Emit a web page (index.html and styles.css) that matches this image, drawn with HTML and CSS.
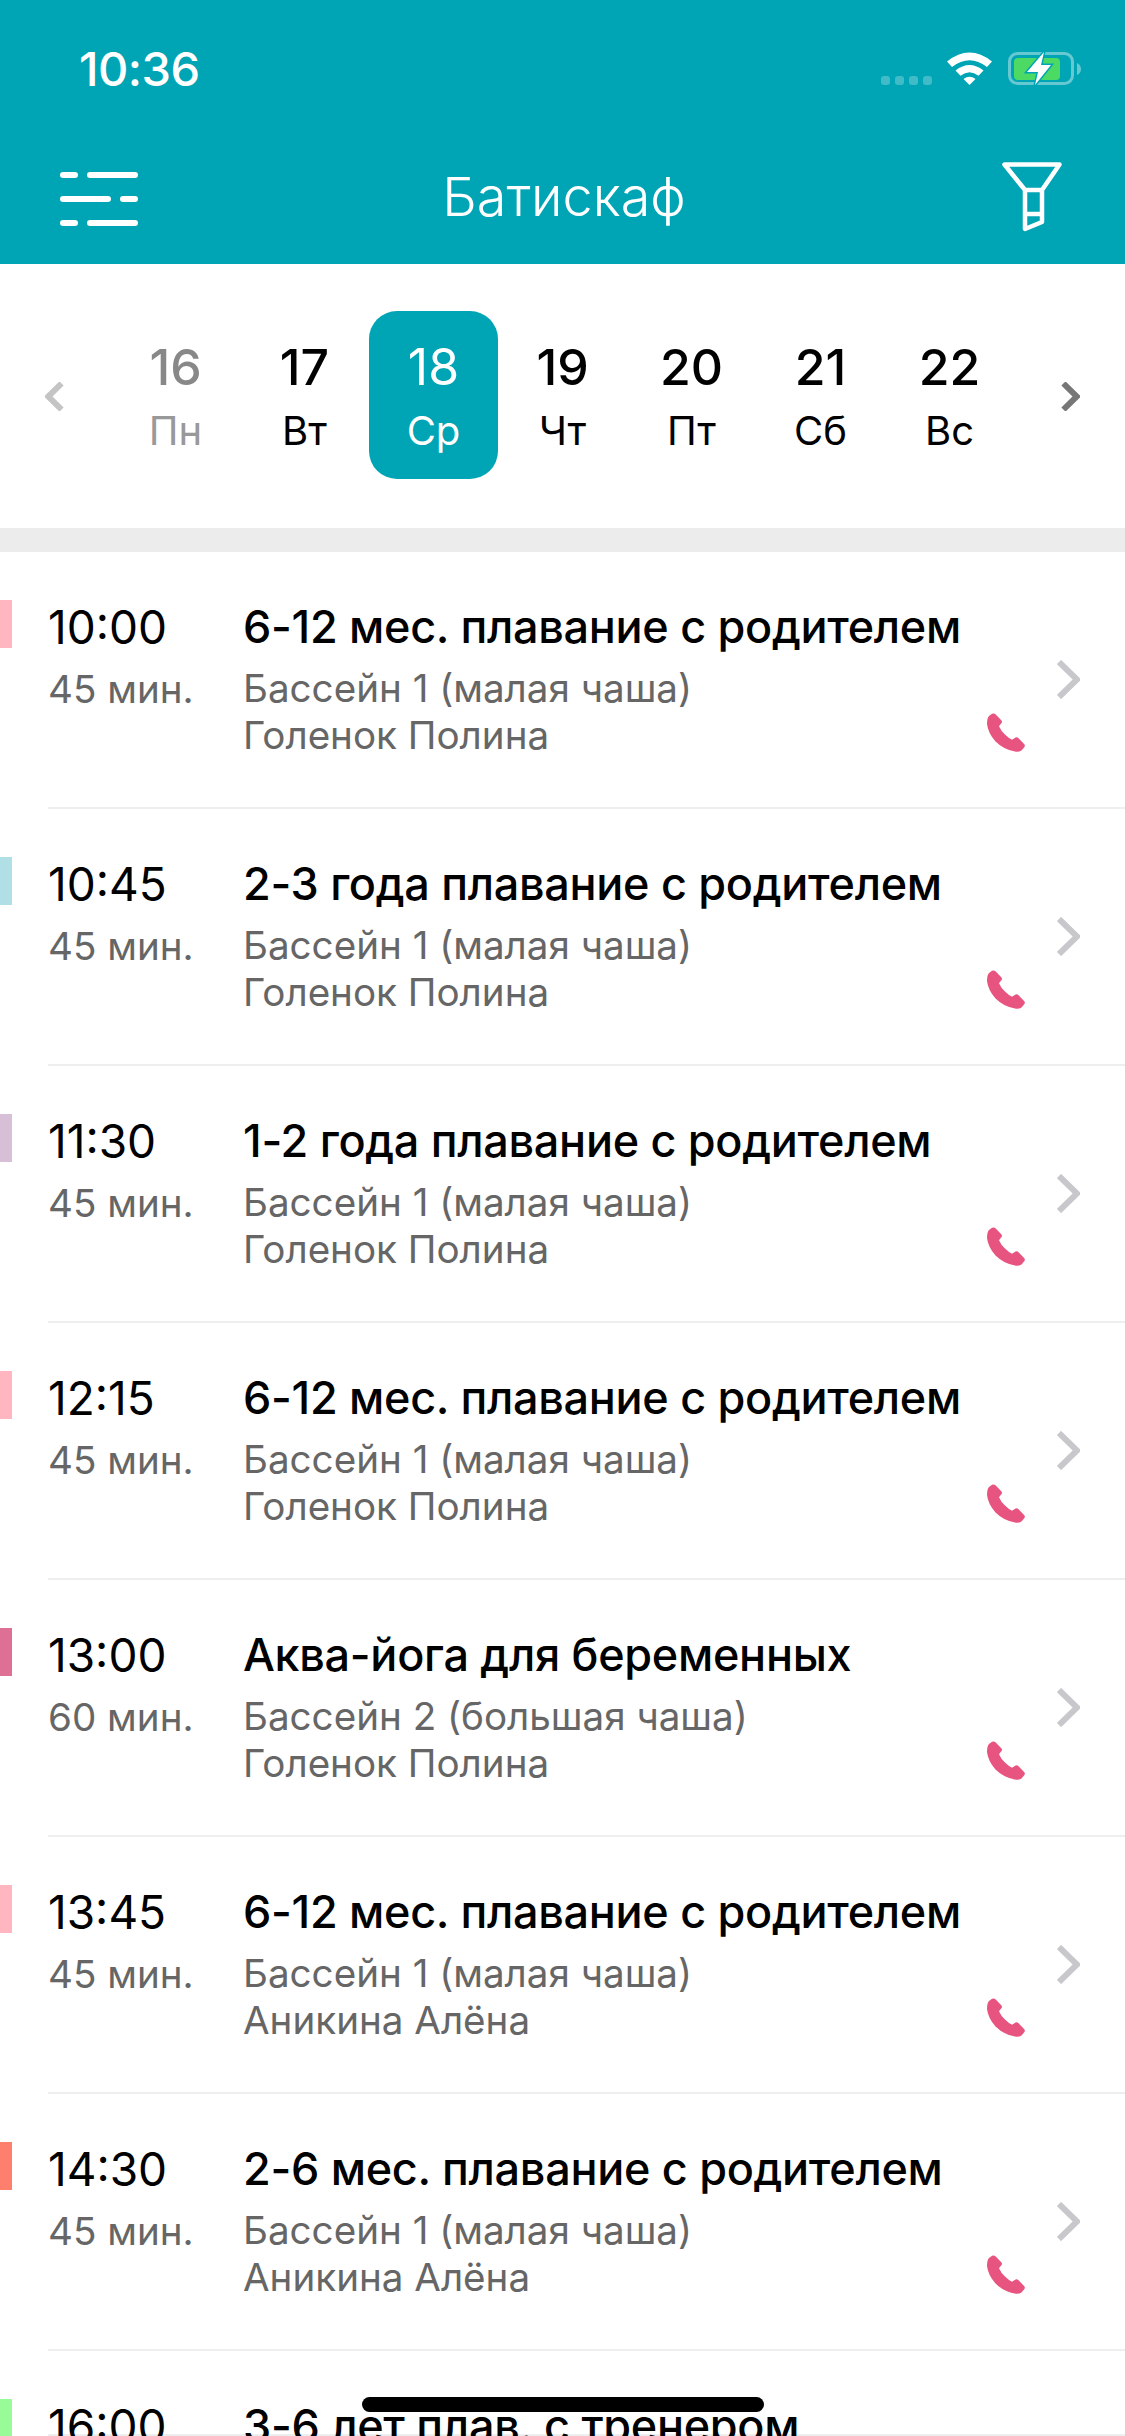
FILE: index.html
```html
<!DOCTYPE html>
<html lang="ru">
<head>
    <meta charset="UTF-8">
    <title>Батискаф</title>
    <link rel="stylesheet" href="styles.css">
</head>
<body>
    <svg class="sprite" width="0" height="0">
        <symbol id="phone" viewBox="0 0 38 39">
            <path d="M2 3 L5 .8 Q7 -.2 8.5 1.2 L14.5 7.5 Q15.5 9 14.5 10 L12 13.2 Q14 18 18 21.5 Q21.5 25 25 26.8 L28.5 24.5 Q30 23.7 31.3 25 L37.3 31.2 Q38.5 33 37 34.5 L34.5 37.5 Q32.5 39 29 38.8 Q17 37 8.5 28.5 Q1 20 0 11 Q0 5 2 3 Z"/>
        </symbol>
        <symbol id="chevron" viewBox="0 0 23 39">
            <path d="M2 2 L20 19.5 L2 37" fill="none" stroke="currentColor"/>
        </symbol>
    </svg>

    <header class="top">
        <div class="status">
            <span class="clock">10:36</span>
            <div class="status-icons">
                <div class="signal"><i></i><i></i><i></i><i></i></div>
                <svg class="wifi" width="45" height="33" viewBox="0 0 45 33">
                    <path d="M0 9.5 Q22.5 -8.5 45 9.5 L40 15 Q22.5 1.5 5 15 Z" fill="#fff"/>
                    <path d="M8.5 18.5 Q22.5 7.5 36.5 18.5 L31.5 23.8 Q22.5 16.5 13.5 23.8 Z" fill="#fff"/>
                    <path d="M16.5 27 Q22.5 22.5 28.5 27 L22.5 33 Z" fill="#fff"/>
                </svg>
                <svg class="battery" width="74" height="34" viewBox="0 0 74 34">
                    <rect x="1.5" y="1.5" width="63" height="30" rx="8" fill="none" stroke="#fff" stroke-opacity=".4" stroke-width="3"/>
                    <path d="M69 11 Q73 13 73 17 Q73 21 69 23 Z" fill="#fff" fill-opacity=".4"/>
                    <rect x="6" y="6" width="46" height="22" rx="4" fill="#4cd964"/>
                    <path d="M36 0 L19 20 L30 20 L27 33 L43 13 L33 13 Z" fill="#fff" stroke="#00a5b5" stroke-width="3" paint-order="stroke"/>
                </svg>
            </div>
        </div>
        <nav class="navbar">
            <svg class="menu-icon" width="78" height="54" viewBox="0 0 78 54">
                <g fill="#fff">
                    <rect x="0" y="0" width="18" height="6" rx="3"/>
                    <rect x="27" y="0" width="51" height="6" rx="3"/>
                    <rect x="0" y="24" width="51" height="6" rx="3"/>
                    <rect x="60" y="24" width="18" height="6" rx="3"/>
                    <rect x="0" y="48" width="18" height="6" rx="3"/>
                    <rect x="27" y="48" width="51" height="6" rx="3"/>
                </g>
            </svg>
            <h1 class="title">Батискаф</h1>
            <svg class="filter-icon" width="60" height="70" viewBox="0 0 60 70">
                <path d="M2.5 2.5 H57.5 L40 28 V60 L23 67 V28 Z M23 28 H40 M23 52 H40" fill="none" stroke="#fff" stroke-width="4.5" stroke-linejoin="round"/>
            </svg>
        </nav>
    </header>

    <section class="dates">
        <svg class="arrow arrow-prev"><use href="#chevron"/></svg>
        <div class="week">
            <div class="day day-past"><b>16</b><span>Пн</span></div>
            <div class="day"><b>17</b><span>Вт</span></div>
            <div class="day day-current"><b>18</b><span>Ср</span></div>
            <div class="day"><b>19</b><span>Чт</span></div>
            <div class="day"><b>20</b><span>Пт</span></div>
            <div class="day"><b>21</b><span>Сб</span></div>
            <div class="day"><b>22</b><span>Вс</span></div>
        </div>
        <svg class="arrow arrow-next"><use href="#chevron"/></svg>
    </section>

    <main class="lessons">
        <article class="lesson">
            <div class="mark mark-pink"></div>
            <div class="lesson-body">
                <div class="when"><div class="time">10:00</div><div class="length">45 мин.</div></div>
                <div class="info"><div class="name">6-12 мес. плавание с родителем</div><div class="place">Бассейн 1 (малая чаша)</div><div class="place">Голенок Полина</div></div>
                <div class="actions"><svg class="go"><use href="#chevron"/></svg><svg class="call"><use href="#phone"/></svg></div>
            </div>
        </article>
        <article class="lesson">
            <div class="mark mark-blue"></div>
            <div class="lesson-body">
                <div class="when"><div class="time">10:45</div><div class="length">45 мин.</div></div>
                <div class="info"><div class="name">2-3 года плавание с родителем</div><div class="place">Бассейн 1 (малая чаша)</div><div class="place">Голенок Полина</div></div>
                <div class="actions"><svg class="go"><use href="#chevron"/></svg><svg class="call"><use href="#phone"/></svg></div>
            </div>
        </article>
        <article class="lesson">
            <div class="mark mark-thistle"></div>
            <div class="lesson-body">
                <div class="when"><div class="time">11:30</div><div class="length">45 мин.</div></div>
                <div class="info"><div class="name">1-2 года плавание с родителем</div><div class="place">Бассейн 1 (малая чаша)</div><div class="place">Голенок Полина</div></div>
                <div class="actions"><svg class="go"><use href="#chevron"/></svg><svg class="call"><use href="#phone"/></svg></div>
            </div>
        </article>
        <article class="lesson">
            <div class="mark mark-pink"></div>
            <div class="lesson-body">
                <div class="when"><div class="time">12:15</div><div class="length">45 мин.</div></div>
                <div class="info"><div class="name">6-12 мес. плавание с родителем</div><div class="place">Бассейн 1 (малая чаша)</div><div class="place">Голенок Полина</div></div>
                <div class="actions"><svg class="go"><use href="#chevron"/></svg><svg class="call"><use href="#phone"/></svg></div>
            </div>
        </article>
        <article class="lesson">
            <div class="mark mark-violet"></div>
            <div class="lesson-body">
                <div class="when"><div class="time">13:00</div><div class="length">60 мин.</div></div>
                <div class="info"><div class="name">Аква-йога для беременных</div><div class="place">Бассейн 2 (большая чаша)</div><div class="place">Голенок Полина</div></div>
                <div class="actions"><svg class="go"><use href="#chevron"/></svg><svg class="call"><use href="#phone"/></svg></div>
            </div>
        </article>
        <article class="lesson">
            <div class="mark mark-pink"></div>
            <div class="lesson-body">
                <div class="when"><div class="time">13:45</div><div class="length">45 мин.</div></div>
                <div class="info"><div class="name">6-12 мес. плавание с родителем</div><div class="place">Бассейн 1 (малая чаша)</div><div class="place">Аникина Алёна</div></div>
                <div class="actions"><svg class="go"><use href="#chevron"/></svg><svg class="call"><use href="#phone"/></svg></div>
            </div>
        </article>
        <article class="lesson">
            <div class="mark mark-salmon"></div>
            <div class="lesson-body">
                <div class="when"><div class="time">14:30</div><div class="length">45 мин.</div></div>
                <div class="info"><div class="name">2-6 мес. плавание с родителем</div><div class="place">Бассейн 1 (малая чаша)</div><div class="place">Аникина Алёна</div></div>
                <div class="actions"><svg class="go"><use href="#chevron"/></svg><svg class="call"><use href="#phone"/></svg></div>
            </div>
        </article>
        <article class="lesson lesson-cut">
            <div class="mark mark-green"></div>
            <div class="lesson-body">
                <div class="when"><div class="time">16:00</div></div>
                <div class="info"><div class="name">3-6 лет плав. с тренером</div></div>
            </div>
        </article>
    </main>

    <div class="home-bar"></div>
</body>
</html>
```

FILE: styles.css
```css
html, body {
    height: 2436px;
    overflow: hidden;
}

body {
    margin: 0;
    position: relative;
    background-color: #fff;
    font-family: Inter, "Noto Sans", sans-serif;
    color: #000;
}

.sprite {
    position: absolute;
}

/* шапка */
.top {
    height: 264px;
    background-color: #00a5b5;
    color: #fff;
}

.status {
    height: 132px;
    padding: 0 43px 0 79px;
    display: flex;
    justify-content: space-between;
    align-items: flex-start;
    box-sizing: border-box;
}

.clock {
    margin-top: 42px;
    font-size: 47px;
    line-height: 54px;
    font-weight: 500;
    letter-spacing: -0.5px;
}

.status-icons {
    margin-top: 52px;
    display: flex;
    align-items: flex-start;
}

.signal {
    margin-top: 24px;
    margin-right: 15px;
    display: flex;
    gap: 5px;
}

.signal i {
    width: 9px;
    height: 9px;
    border-radius: 3px;
    background-color: rgba(255, 255, 255, 0.25);
}

.wifi {
    margin-right: 16px;
}

.navbar {
    height: 132px;
    padding: 30px 63px 0 60px;
    display: grid;
    grid-template-columns: 1fr auto 1fr;
    align-items: start;
    box-sizing: border-box;
}

.menu-icon {
    margin-top: 10px;
}

.filter-icon {
    justify-self: end;
}

.title {
    margin: 0;
    padding-left: 6px;
    font-size: 54px;
    line-height: 70px;
    font-weight: 300;
}

/* даты */
.dates {
    height: 264px;
    padding: 47px 45px 0;
    display: flex;
    justify-content: space-between;
    align-items: flex-start;
    box-sizing: border-box;
}

.arrow {
    width: 19px;
    height: 29px;
    margin-top: 71px;
    stroke-width: 8;
}

.arrow-prev {
    color: #c4c4c4;
    transform: scaleX(-1);
}

.arrow-next {
    color: #777;
}

.week {
    display: flex;
}

.day {
    width: 129px;
    height: 168px;
    padding-top: 31px;
    display: flex;
    flex-direction: column;
    align-items: center;
    box-sizing: border-box;
    border-radius: 28px;
}

.day b {
    font-size: 50px;
    line-height: 50px;
    font-weight: 500;
}

.day span {
    margin-top: 16px;
    font-size: 40px;
    line-height: 46px;
}

.day-past {
    color: #888;
}

.day-past span {
    color: #999;
}

.day-current {
    background-color: #00a5b5;
    color: #fff;
}

.day-current b {
    font-weight: 400;
}

/* список занятий */
.lessons {
    border-top: 24px solid #ececec;
}

.lesson {
    display: flex;
    height: 257px;
}

.lesson-cut {
    height: 85px;
    overflow: hidden;
}

.mark {
    flex: 0 0 12px;
    height: 48px;
    margin-top: 48px;
}

.mark-pink { background-color: #ffb6c1; }
.mark-blue { background-color: #b0e0e6; }
.mark-thistle { background-color: #d8bfd8; }
.mark-violet { background-color: #de7096; }
.mark-salmon { background-color: #ff7f6f; }
.mark-green { background-color: #98fb98; }

.lesson-body {
    flex: 1;
    margin-left: 36px;
    padding-top: 48px;
    padding-right: 45px;
    display: flex;
    box-sizing: border-box;
    border-bottom: 2px solid #eee;
}

.when {
    flex: 0 0 196px;
    margin-right: -1px;
}

.info {
    flex: 1;
}

.time, .name {
    font-size: 46px;
    line-height: 54px;
}

.name {
    font-size: 45px;
    font-weight: 500;
    letter-spacing: -0.3px;
}

.length, .place {
    font-size: 38.6px;
    line-height: 47px;
    color: #666;
}

.length {
    margin-top: 12px;
}

.info .place:nth-child(2) {
    margin-top: 11px;
}

.actions {
    flex: 0 0 93px;
    margin-top: 60px;
    display: flex;
    flex-direction: column;
}

.go {
    align-self: flex-end;
    width: 23px;
    height: 39px;
    color: #c8c8cc;
    stroke-width: 6;
}

.call {
    width: 38px;
    height: 39px;
    margin-top: 14px;
    fill: #e75480;
}

.home-bar {
    position: absolute;
    left: 362px;
    top: 2397px;
    width: 402px;
    height: 15px;
    border-radius: 8px;
    background-color: #000;
}
```
